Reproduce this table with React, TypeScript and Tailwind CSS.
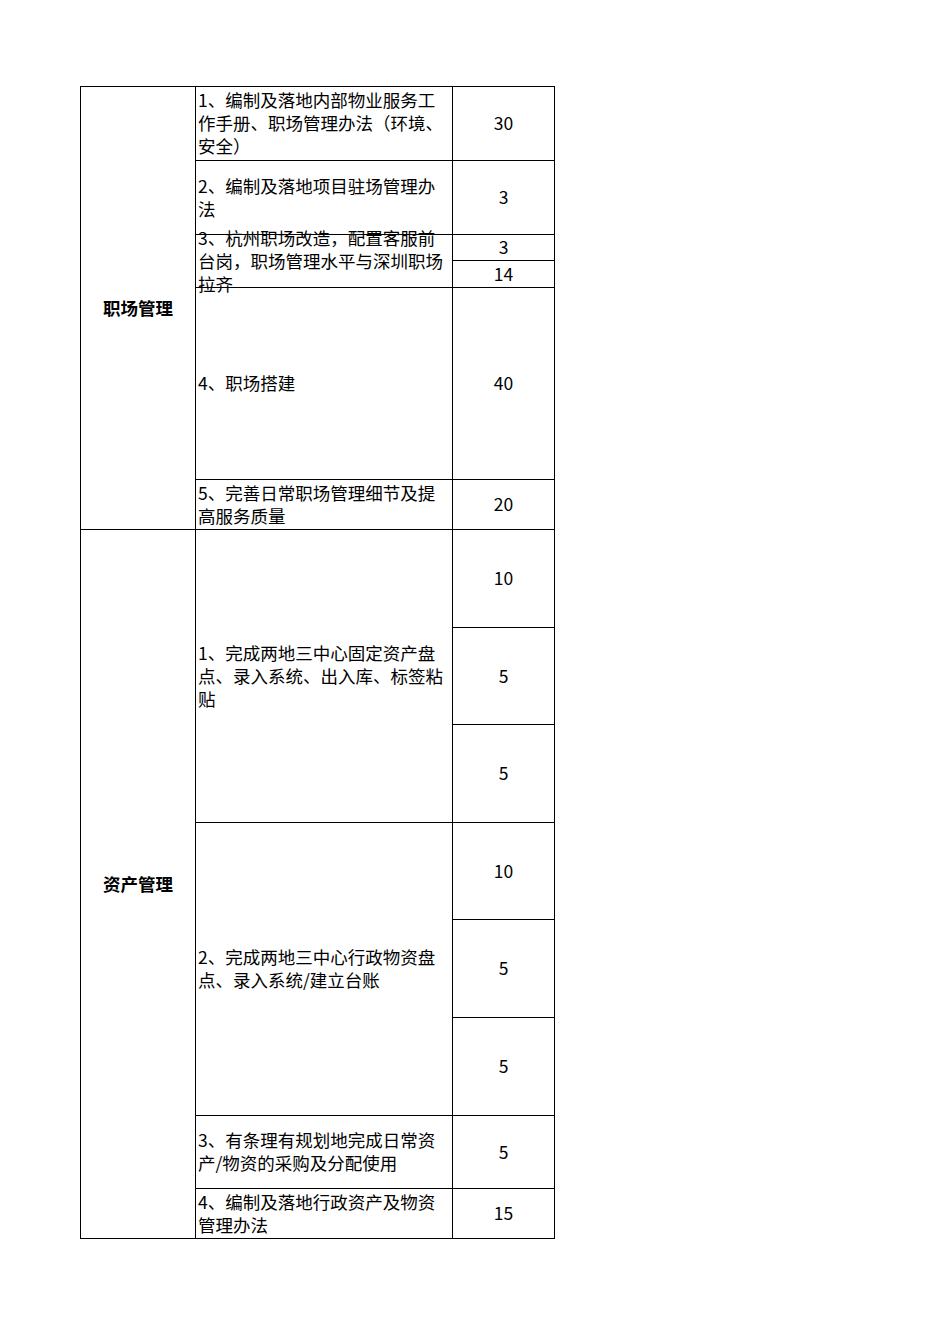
import React from "react";

// Task table: category / task / score, laid out as a bordered grid.
type Cell = {
  place: string;
  kind: "group" | "task" | "score";
  text: string;
};

const CELLS: Cell[] = [
  { place: "col-start-1 row-start-1 row-span-6", kind: "group", text: "职场管理" },
  { place: "col-start-1 row-start-7 row-span-8", kind: "group", text: "资产管理" },

  { place: "col-start-2 row-start-1", kind: "task", text: "1、编制及落地内部物业服务工作手册、职场管理办法（环境、安全）" },
  { place: "col-start-2 row-start-2", kind: "task", text: "2、编制及落地项目驻场管理办法" },
  { place: "col-start-2 row-start-3 row-span-2", kind: "task", text: "3、杭州职场改造，配置客服前台岗，职场管理水平与深圳职场拉齐" },
  { place: "col-start-2 row-start-5", kind: "task", text: "4、职场搭建" },
  { place: "col-start-2 row-start-6", kind: "task", text: "5、完善日常职场管理细节及提高服务质量" },
  { place: "col-start-2 row-start-7 row-span-3", kind: "task", text: "1、完成两地三中心固定资产盘点、录入系统、出入库、标签粘贴" },
  { place: "col-start-2 row-start-10 row-span-3", kind: "task", text: "2、完成两地三中心行政物资盘点、录入系统/建立台账" },
  { place: "col-start-2 row-start-13", kind: "task", text: "3、有条理有规划地完成日常资产/物资的采购及分配使用" },
  { place: "col-start-2 row-start-14", kind: "task", text: "4、编制及落地行政资产及物资管理办法" },

  { place: "col-start-3 row-start-1", kind: "score", text: "30" },
  { place: "col-start-3 row-start-2", kind: "score", text: "3" },
  { place: "col-start-3 row-start-3", kind: "score", text: "3" },
  { place: "col-start-3 row-start-4", kind: "score", text: "14" },
  { place: "col-start-3 row-start-5", kind: "score", text: "40" },
  { place: "col-start-3 row-start-6", kind: "score", text: "20" },
  { place: "col-start-3 row-start-7", kind: "score", text: "10" },
  { place: "col-start-3 row-start-8", kind: "score", text: "5" },
  { place: "col-start-3 row-start-9", kind: "score", text: "5" },
  { place: "col-start-3 row-start-10", kind: "score", text: "10" },
  { place: "col-start-3 row-start-11", kind: "score", text: "5" },
  { place: "col-start-3 row-start-12", kind: "score", text: "5" },
  { place: "col-start-3 row-start-13", kind: "score", text: "5" },
  { place: "col-start-3 row-start-14", kind: "score", text: "15" },
];

function TableCell({ cell }: { cell: Cell }) {
  const base = `${cell.place} flex items-center border-r border-b border-black pb-[2px]`;

  if (cell.kind === "group") {
    return <div className={`${base} justify-center font-bold`}>{cell.text}</div>;
  }
  if (cell.kind === "task") {
    return (
      <div className={`${base} overflow-visible pl-[2px]`}>
        <p className="w-[250px]">{cell.text}</p>
      </div>
    );
  }
  return <div className={`${base} justify-center`}>{cell.text}</div>;
}

export default function App() {
  return (
    <div className="min-h-[1344px] w-[950px] bg-white pt-[86px] pl-[80px] font-['Noto_Sans_CJK_SC','Noto_Sans',sans-serif] text-[17.5px] leading-[23px] text-black">
      <div className="grid w-[475px] grid-cols-[115px_257px_102px] grid-rows-[74px_74px_26px_27px_192px_50px_98px_97px_98px_97px_98px_98px_73px_50px] border-t border-l border-black">
        {CELLS.map((c) => (
          <TableCell key={c.place} cell={c} />
        ))}
      </div>
    </div>
  );
}
